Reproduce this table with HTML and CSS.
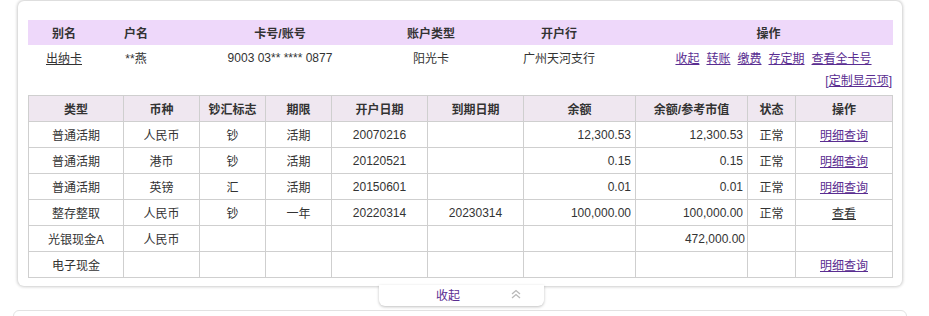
FILE: index.html
```html
<!DOCTYPE html>
<html lang="zh-CN">
<head>
<meta charset="utf-8">
<link rel="stylesheet" href="styles.css">
</head>
<body>
<div class="page">
  <div class="card">
    <div class="info">
      <div class="info-head">
        <span>别名</span><span>户名</span><span>卡号/账号</span><span>账户类型</span><span>开户行</span><span>操作</span>
      </div>
      <div class="info-row">
        <span><a class="dark" href="#">出纳卡</a></span>
        <span>**燕</span>
        <span>9003 03** **** 0877</span>
        <span>阳光卡</span>
        <span>广州天河支行</span>
        <span class="ops"><a href="#">收起</a><a href="#">转账</a><a href="#">缴费</a><a href="#">存定期</a><a href="#">查看全卡号</a></span>
      </div>
    </div>
    <div class="custom"><a href="#" class="custom-link">[<u>定制显示项</u>]</a></div>
    <table class="grid">
      <colgroup>
        <col style="width:95px"><col style="width:76px"><col style="width:66px"><col style="width:66px"><col style="width:96px"><col style="width:96px"><col style="width:112px"><col style="width:112px"><col style="width:48px"><col style="width:97px">
      </colgroup>
      <thead>
        <tr><th>类型</th><th>币种</th><th>钞汇标志</th><th>期限</th><th>开户日期</th><th>到期日期</th><th>余额</th><th>余额/参考市值</th><th>状态</th><th>操作</th></tr>
      </thead>
      <tbody>
        <tr><td>普通活期</td><td>人民币</td><td>钞</td><td>活期</td><td>20070216</td><td></td><td class="num">12,300.53</td><td class="num">12,300.53</td><td>正常</td><td><a href="#">明细查询</a></td></tr>
        <tr><td>普通活期</td><td>港币</td><td>钞</td><td>活期</td><td>20120521</td><td></td><td class="num">0.15</td><td class="num">0.15</td><td>正常</td><td><a href="#">明细查询</a></td></tr>
        <tr><td>普通活期</td><td>英镑</td><td>汇</td><td>活期</td><td>20150601</td><td></td><td class="num">0.01</td><td class="num">0.01</td><td>正常</td><td><a href="#">明细查询</a></td></tr>
        <tr><td>整存整取</td><td>人民币</td><td>钞</td><td>一年</td><td>20220314</td><td>20230314</td><td class="num">100,000.00</td><td class="num">100,000.00</td><td>正常</td><td><a class="dark" href="#">查看</a></td></tr>
        <tr><td>光银现金A</td><td>人民币</td><td></td><td></td><td></td><td></td><td></td><td class="num tight">472,000.00</td><td></td><td></td></tr>
        <tr><td>电子现金</td><td></td><td></td><td></td><td></td><td></td><td></td><td></td><td></td><td><a href="#">明细查询</a></td></tr>
      </tbody>
    </table>
  </div>
  <div class="tab">
    <span class="tab-label">收起</span>
    <svg class="chev" width="10" height="10" viewBox="0 0 10 10" aria-hidden="true">
      <path d="M1 5 L5 1.5 L9 5 M1 9 L5 5.5 L9 9" fill="none" stroke="#b8b8b8" stroke-width="1.3"/>
    </svg>
  </div>
  <div class="next-card"></div>
</div>
</body>
</html>
```
FILE: styles.css
```css
* { box-sizing: border-box; }
html, body { margin: 0; padding: 0; background: #fff; }
body {
  font-family: "Liberation Sans", "Noto Sans CJK SC", sans-serif;
  font-size: 12px;
  color: #333;
  width: 929px;
  height: 316px;
  overflow: hidden;
}
a { color: #5a2d91; text-decoration: underline; }
a.dark { color: #333; }

.page { padding-top: 1px; position: relative; }

.card {
  margin-left: 18px;
  width: 884px;
  height: 285px;
  background: #fff;
  border-radius: 6px;
  box-shadow: 0 0 3px 1px rgba(0,0,0,0.2);
  padding: 19px 9px 0 10px;
  position: relative;
  z-index: 1;
}

.info-head, .info-row {
  display: grid;
  grid-template-columns: 72px 72px 216px 86px 170px 1fr;
  height: 25px;
  align-items: center;
  text-align: center;
}
.info-head { background: #eed8fa; font-weight: bold; }
.ops {
  display: flex;
  justify-content: center;
  gap: 7px;
  padding-left: 10px;
}

.custom {
  text-align: right;
  line-height: 16px;
  padding-top: 3px;
  padding-right: 1px;
  height: 25px;
}
.custom-link { text-decoration: none; }
.custom-link u { text-decoration: underline; }

.grid {
  border-collapse: collapse;
  table-layout: fixed;
  width: 864px;
}
.grid th, .grid td {
  border: 1px solid #cfcfcf;
  height: 26px;
  padding: 0 4px;
  text-align: center;
  white-space: nowrap;
}
.grid th { background: #efe7f0; font-weight: bold; }
.grid td.num { text-align: right; padding-right: 4px; }
.grid td.tight { padding-right: 2px; }

.tab {
  position: relative;
  z-index: 2;
  margin-left: 379px;
  margin-top: -1px;
  width: 165px;
  height: 21px;
  background: #fff;
  border-radius: 0 0 6px 6px;
  box-shadow: 0 1px 3px 0 rgba(0,0,0,0.25);
  display: flex;
  align-items: center;
  padding-left: 57px;
  padding-bottom: 3px;
}
.tab-label { color: #5a2d91; }
.chev { margin-left: 51px; }

.next-card {
  margin-left: 13px;
  margin-top: 4px;
  width: 894px;
  height: 30px;
  border: 1px solid #e2e2e2;
  border-radius: 6px 6px 0 0;
}
```
